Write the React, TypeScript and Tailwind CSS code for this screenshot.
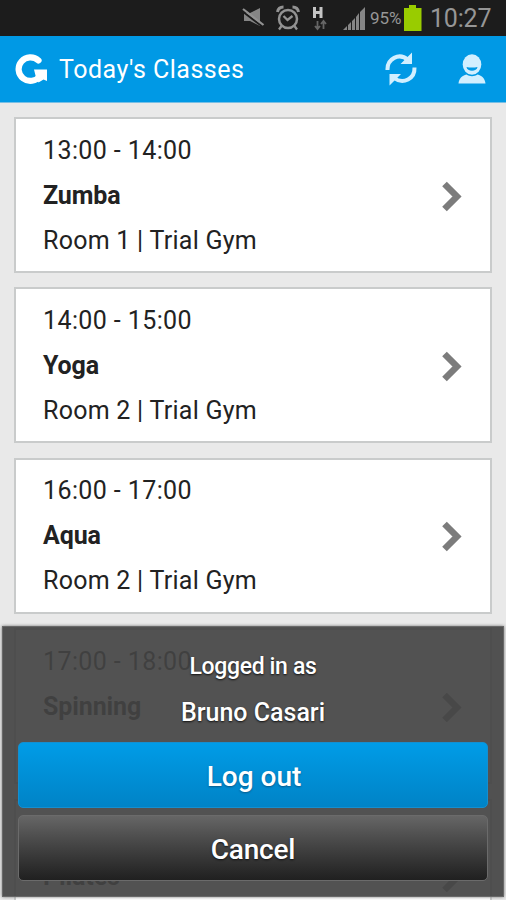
type GymClass = {
  time: string;
  name: string;
  place?: string;
};

const classes: GymClass[] = [
  { time: "13:00 - 14:00", name: "Zumba", place: "Room 1 | Trial Gym" },
  { time: "14:00 - 15:00", name: "Yoga", place: "Room 2 | Trial Gym" },
  { time: "16:00 - 17:00", name: "Aqua", place: "Room 2 | Trial Gym" },
  { time: "17:00 - 18:00", name: "Spinning" },
  { time: "", name: "Pilates" },
];

function StatusBar() {
  return (
    <div className="flex h-9 shrink-0 items-start bg-[#1c1c1c] text-[#969696]">
      <svg className="ml-[242px] mt-[7px] h-[21px] w-[23px]" viewBox="0 0 23 21" aria-hidden>
        <path d="M2 6h6l10-5v18L8 14H2z" fill="#858585" />
        <path d="M0 4l21 16" stroke="#1c1c1c" strokeWidth="2" />
        <path d="M1 2l20.500 16" stroke="#929292" strokeWidth="2.2" />
      </svg>
      <svg className="ml-[11px] mt-[5px] h-[26px] w-[24px]" viewBox="0 0 24 26" fill="none" stroke="#929292" aria-hidden>
        <circle cx="12" cy="14" r="9" strokeWidth="2.5" />
        <path d="M1.500 7C2 4 4.500 2 7.500 2M22.500 7C22 4 19.500 2 16.500 2" strokeWidth="3" />
        <path d="M5.500 21L3 24.500M18.500 21l2.500 3.500M7.500 11l4 4 5-4" strokeWidth="2.3" />
      </svg>
      <svg className="ml-[12px] mt-[7px] h-[25px] w-[18px]" viewBox="0 0 18 25" fill="none" aria-hidden>
        <path d="M2.500 0v11M9 0v11M2.500 5.500H9" stroke="#c4c4c4" strokeWidth="3" />
        <path d="M5.500 14v8M3 19l2.500 3L8 19M11.500 22v-8M9 17l2.500-3 2.500 3" stroke="#666" strokeWidth="1.8" />
      </svg>
      <svg className="ml-[12px] mt-[7px] h-[24px] w-[24px]" viewBox="0 0 24 24" fill="#858585" aria-hidden>
        <path d="M1 23l4-4v4zM6 18l3-3v8H6zM10 14l3-3v12h-3zM14 10l3-4v17h-3zM18 5l5-5v23h-5z" />
      </svg>
      <span className="ml-1 mt-[6px] w-[33px] text-[17px] leading-6 whitespace-nowrap">95%</span>
      <svg className="ml-[1px] mt-[5px] h-[26px] w-[18px]" viewBox="0 0 18 26" fill="#99cc00" aria-hidden>
        <path d="M0 3h5V0h7v3h5.500v23H0z" />
      </svg>
      <span className="ml-[8px] mt-[3px] text-[25px] leading-8 tracking-[-0.2px] whitespace-nowrap">10:27</span>
    </div>
  );
}

function Header() {
  return (
    <header className="flex h-[67px] shrink-0 items-center border-b border-[#78bfe5] bg-[#0099e5] text-white">
      <svg className="ml-[15px] h-[31px] w-[33px]" viewBox="0 0 33 31" aria-hidden>
        <path d="M23.500 6.500A11.800 11.800 0 1 0 25 22" fill="none" stroke="currentColor" strokeWidth="6.200" strokeLinecap="round" />
        <path d="M19 15.500h13V27l-3.500-1.500-5 3-3-7z" fill="currentColor" />
      </svg>
      <h1 className="mt-[2px] ml-[11px] text-[25px] leading-8 tracking-[0.5px] whitespace-nowrap">Today's Classes</h1>
      <svg className="mr-[41px] ml-auto h-[34px] w-[32px]" viewBox="0 0 32 34" aria-hidden>
        <g fill="none" stroke="#d2efff" strokeWidth="4">
          <path d="M2.500 18C2 7 14 0 23 8" />
          <path d="M29.500 15.500c.5 11-11 17.500-20.500 10.500" />
        </g>
        <path d="M27 .5V12H15.500zM4.500 33.500V22H16z" fill="#d2efff" />
      </svg>
      <svg className="mr-[20px] h-[30px] w-[28px]" viewBox="0 0 28 30" fill="#d2efff" aria-hidden>
        <ellipse cx="14" cy="10.500" rx="9.300" ry="10.300" />
        <path d="M8.500 13c3 .7 8 .7 11 0-.5 5-10.500 5-11 0z" fill="#0099e5" />
        <path d="M.5 29.500c.5-5 3.500-8 8-9 3 2.300 8 2.300 11 0 4.500 1 7.500 4 8 9z" />
      </svg>
    </header>
  );
}

function ClassCard({ item }: { item: GymClass }) {
  return (
    <article className="flex h-[156px] shrink-0 justify-between border-2 border-[#c9cbcb] bg-white pt-[8.5px] pr-[28px] pl-[27px] text-[25px] leading-[45px] text-[#222]">
      <div className="whitespace-nowrap">
        <p className="h-[45px] tracking-[0.4px]">{item.time}</p>
        <p className="font-bold tracking-[-0.1px]">{item.name}</p>
        {item.place && <p className="tracking-[0.26px]">{item.place}</p>}
      </div>
      <svg className="mt-[53px] h-[31px] w-[21px]" viewBox="0 0 21 31" aria-hidden>
        <path d="M3.500 3L16 15.500 3.500 28" fill="none" stroke="#7c7c7c" strokeWidth="6.500" />
      </svg>
    </article>
  );
}

function LogoutSheet() {
  return (
    <section className="absolute top-[626px] right-[2px] left-[2px] flex h-[271px] flex-col border border-[#686868] bg-[#434343]/92 px-[15px] text-center font-medium text-white shadow-[0_0_3px_#777]">
      <p className="mt-[21px] text-[23px] leading-[38px] tracking-[-0.35px] text-shadow-[0_1px_2px_#111]">Logged in as</p>
      <p className="mt-[7px] text-[25px] leading-[40px] text-shadow-[0_1px_2px_#111]">Bruno Casari</p>
      <button className="mt-[9px] h-[66px] shrink-0 rounded-[5px] border border-[#148fd0] bg-linear-to-b from-[#009ce7] to-[#0083c6] pt-[3px] pl-[2px] text-[28px] text-shadow-[0_1px_2px_#07598a]">
        Log out
      </button>
      <button className="mt-[7px] h-[66px] shrink-0 rounded-[5px] border border-[#6b6b6b] bg-linear-to-b from-[#666] to-[#202020] pt-[3px] text-[28px] tracking-[-0.2px] text-shadow-[0_1px_2px_#111]">
        Cancel
      </button>
    </section>
  );
}

export default function App() {
  return (
    <div className="relative flex h-[900px] w-[506px] flex-col overflow-hidden bg-[#e9e9e9] font-['Roboto',sans-serif]">
      <StatusBar />
      <Header />
      <main className="flex min-h-0 flex-1 flex-col gap-[14.4px] overflow-hidden px-[14px] pt-[14px]">
        {classes.map((item) => (
          <ClassCard key={item.name} item={item} />
        ))}
      </main>
      <LogoutSheet />
    </div>
  );
}
